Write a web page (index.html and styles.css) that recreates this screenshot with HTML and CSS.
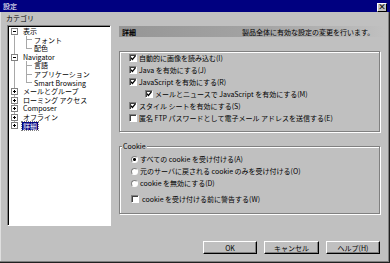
FILE: index.html
```html
<!DOCTYPE html>
<html lang="ja">
<head>
  <meta charset="UTF-8">
  <title>設定</title>
  <link rel="stylesheet" href="styles.css">
</head>
<body>
  <div class="window">
    <div class="titlebar">
      <span class="title">設定</span>
      <span class="close">×</span>
    </div>

    <div class="main">
      <div class="sidebar">
        <div class="cat-label">カテゴリ</div>
        <ul class="tree">
          <li class="node root first"><span class="toggle"></span><span class="text">表示</span></li>
          <li class="node child"><span class="branch"></span><span class="text">フォント</span></li>
          <li class="node child last"><span class="branch"></span><span class="text">配色</span></li>
          <li class="node root"><span class="toggle"></span><span class="text">Navigator</span></li>
          <li class="node child"><span class="branch"></span><span class="text">言語</span></li>
          <li class="node child"><span class="branch"></span><span class="text">アプリケーション</span></li>
          <li class="node child last"><span class="branch"></span><span class="text">Smart Browsing</span></li>
          <li class="node root"><span class="toggle plus"></span><span class="text">メールとグループ</span></li>
          <li class="node root"><span class="toggle plus"></span><span class="text">ローミング アクセス</span></li>
          <li class="node root"><span class="toggle plus"></span><span class="text">Composer</span></li>
          <li class="node root"><span class="toggle plus"></span><span class="text">オフライン</span></li>
          <li class="node root end"><span class="toggle plus"></span><span class="text selected">詳細</span></li>
        </ul>
      </div>

      <div class="panel">
        <div class="panel-head">
          <span class="head-title">詳細</span>
          <span class="head-desc">製品全体に有効な設定の変更を行います。</span>
        </div>

        <div class="group">
          <div class="row"><span class="check on"></span>自動的に画像を読み込む(I)</div>
          <div class="row"><span class="check on"></span>Java を有効にする(J)</div>
          <div class="row"><span class="check on"></span>JavaScript を有効にする(R)</div>
          <div class="row indent"><span class="check on"></span>メールとニュースで JavaScript を有効にする(M)</div>
          <div class="row"><span class="check on"></span>スタイル シートを有効にする(S)</div>
          <div class="row"><span class="check"></span>匿名 FTP パスワードとして電子メール アドレスを送信する(E)</div>
        </div>

        <div class="group cookie">
          <span class="legend">Cookie</span>
          <div class="row"><span class="radio on"></span>すべての cookie を受け付ける(A)</div>
          <div class="row"><span class="radio"></span>元のサーバに戻される cookie のみを受け付ける(O)</div>
          <div class="row"><span class="radio"></span>cookie を無効にする(D)</div>
          <div class="row warn"><span class="check"></span>cookie を受け付ける前に警告する(W)</div>
        </div>
      </div>
    </div>

    <div class="buttons">
      <button class="btn default">OK</button>
      <button class="btn wide">キャンセル</button>
      <button class="btn">ヘルプ(H)</button>
    </div>
  </div>
</body>
</html>
```

FILE: styles.css
```css
* {
  box-sizing: border-box;
}
body {
  margin: 0;
  background: #c0c0c0;
  font-family: "Noto Sans CJK JP", "Noto Sans", sans-serif;
  font-size: 7px;
  color: #000;
}
.window {
  width: 390px;
  height: 263px;
  display: flex;
  flex-direction: column;
  background: #c0c0c0;
  box-shadow: inset -1px -1px 0 #202020, inset -2px -2px 0 #808080, inset 1px 0 0 #dfdfdf;
}

/* title bar */
.titlebar {
  height: 12px;
  background: #000080;
  display: flex;
  align-items: center;
  justify-content: space-between;
  padding: 0 3px 0 3px;
}
.title {
  color: #fff;
  line-height: 9px;
}
.close {
  width: 10px;
  height: 9px;
  background: #c0c0c0;
  border: 1px solid;
  border-color: #fff #000 #000 #fff;
  font-size: 8px;
  line-height: 6px;
  text-align: center;
  font-weight: bold;
  margin-top: 2px;
}

/* main area */
.main {
  display: flex;
  padding-top: 1px;
}
.sidebar {
  width: 111px;
  padding-left: 6px;
}
.cat-label {
  height: 10px;
  line-height: 10px;
}
.tree {
  list-style: none;
  margin: 2px 0 0 1px;
  padding: 1px 0 0 0;
  width: 104px;
  height: 201px;
  background: #fff;
  border: 1px solid;
  border-color: #808080 #fff #fff #808080;
  box-shadow: inset 1px 1px 0 #000;
}
.node {
  height: 8.6px;
  line-height: 8.6px;
  display: flex;
  align-items: center;
  white-space: nowrap;
  background: linear-gradient(#a8a8a8, #a8a8a8) 6px 0 / 1px 100% no-repeat;
}
.node.first {
  background-position: 6px 100%;
  background-size: 1px 50%;
}
.node.end {
  background-size: 1px 50%;
}
.toggle {
  width: 7px;
  height: 7px;
  margin-left: 3px;
  border: 1px solid #808080;
  background: linear-gradient(#000, #000) center / 3px 1px no-repeat, #fff;
}
.toggle.plus {
  background: linear-gradient(#000, #000) center / 3px 1px no-repeat,
    linear-gradient(#000, #000) center / 1px 3px no-repeat, #fff;
}
.root .text {
  margin-left: 4px;
  padding: 0 1px;
}
.branch {
  width: 6px;
  height: 100%;
  margin-left: 18px;
  background: linear-gradient(#a8a8a8, #a8a8a8) 0 0 / 1px 100% no-repeat,
    linear-gradient(#a8a8a8, #a8a8a8) 0 50% / 6px 1px no-repeat;
}
.child.last .branch {
  background: linear-gradient(#a8a8a8, #a8a8a8) 0 0 / 1px 50% no-repeat,
    linear-gradient(#a8a8a8, #a8a8a8) 0 50% / 6px 1px no-repeat;
}
.child .text {
  margin-left: 2px;
}
.selected {
  background: #000080;
  color: #fff;
  outline: 1px dotted #808080;
}

/* right panel */
.panel {
  width: 266px;
  margin-left: 8px;
  margin-top: 13px;
}
.panel-head {
  height: 11px;
  display: flex;
  align-items: center;
  padding-left: 3px;
  background: linear-gradient(to right, #969696, #a4a4a4 55%, #c0c0c0);
}
.head-title {
  width: 120px;
  font-weight: bold;
}
.group {
  position: relative;
  width: 261px;
  margin-top: 14px;
  padding: 0 0 7px 9px;
  border: 1px solid #808080;
  box-shadow: inset 1px 1px 0 #fff, 1px 1px 0 #fff;
}
.row {
  height: 12px;
  display: flex;
  align-items: center;
  white-space: nowrap;
}
.row.indent {
  padding-left: 16px;
}
.check {
  width: 8px;
  height: 8px;
  margin-right: 2px;
  flex: none;
  background: #fff;
  border: 1px solid;
  border-color: #808080 #fff #fff #808080;
  box-shadow: inset 1px 1px 0 #404040;
}
.check.on {
  background: url("data:image/svg+xml,%3Csvg xmlns='http://www.w3.org/2000/svg' viewBox='0 0 6 6'%3E%3Cpath d='M0.8 2.6 L2.4 4.4 L5.4 0.9' fill='none' stroke='%23000' stroke-width='1.3'/%3E%3C/svg%3E") center / 6px 6px no-repeat, #fff;
}

/* cookie group */
.group.cookie {
  padding: 0 0 8px 11px;
}
.legend {
  display: block;
  width: fit-content;
  height: 9px;
  line-height: 9px;
  margin: -5px 0 2px -9px;
  padding: 0 1px;
  background: #c0c0c0;
}
.radio {
  width: 7px;
  height: 7px;
  margin-right: 2px;
  flex: none;
  border-radius: 50%;
  background: #fff;
  border: 1px solid;
  border-color: #808080 #fff #fff #808080;
}
.radio.on {
  background: radial-gradient(circle, #000 0 1.3px, #fff 1.6px);
}
.row.warn {
  margin-top: 4px;
}
.row.warn .check {
  margin-right: 3px;
}

/* buttons */
.buttons {
  margin-top: auto;
  padding: 0 10px 9px 0;
  display: flex;
  justify-content: flex-end;
  gap: 7px;
}
.btn {
  width: 54px;
  height: 13px;
  padding: 0;
  font: inherit;
  line-height: 10px;
  color: #000;
  background: #c0c0c0;
  border: 1px solid;
  border-color: #fff #000 #000 #fff;
  box-shadow: inset -1px -1px 0 #808080;
}
.btn.wide {
  width: 55px;
}
```
